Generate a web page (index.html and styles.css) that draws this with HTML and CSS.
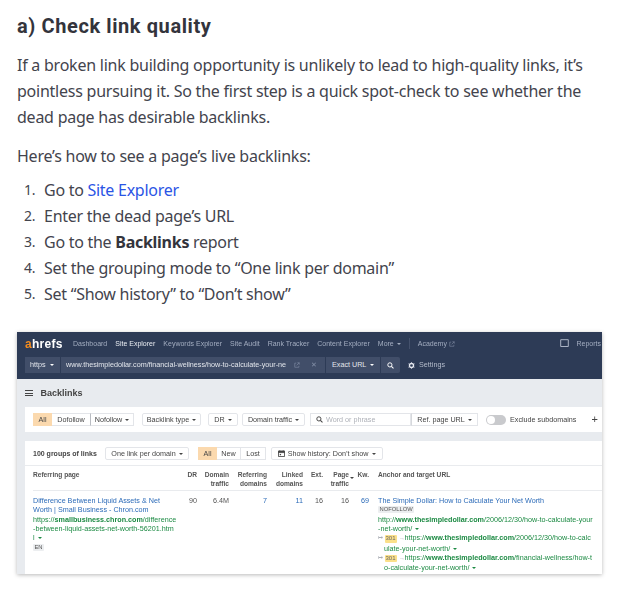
FILE: index.html
```html
<!DOCTYPE html>
<html lang="en">
<head>
<meta charset="utf-8">
<title>Check link quality</title>
<link rel="stylesheet" href="styles.css">
</head>
<body>
<main class="article">
  <h2 class="title">a) Check link quality</h2>
  <p class="para">If a broken link building opportunity is unlikely to lead to high-quality links, it’s pointless pursuing it. So the first step is a quick spot-check to see whether the dead page has desirable backlinks.</p>
  <p class="para intro">Here’s how to see a page’s live backlinks:</p>
  <ol class="steps">
    <li><span>Go to <a class="link" href="#">Site Explorer</a></span></li>
    <li><span>Enter the dead page’s URL</span></li>
    <li><span>Go to the <b>Backlinks</b> report</span></li>
    <li><span>Set the grouping mode to “One link per domain”</span></li>
    <li><span>Set “Show history” to “Don’t show”</span></li>
  </ol>

  <div class="shot">
    <div class="nav">
      <div class="nav-top">
        <span class="logo"><span class="logo-a">a</span>hrefs</span>
        <span class="nav-item">Dashboard</span>
        <span class="nav-item active">Site Explorer</span>
        <span class="nav-item">Keywords Explorer</span>
        <span class="nav-item">Site Audit</span>
        <span class="nav-item">Rank Tracker</span>
        <span class="nav-item">Content Explorer</span>
        <span class="nav-item">More <i class="caret"></i></span>
        <span class="nav-sep"></span>
        <span class="nav-item flush">Academy
          <svg class="ext" viewBox="0 0 8 8"><path d="M3 1.500H1v5.500h5.500V5M4.500 1H7v2.500M7 1 3.500 4.500" fill="none" stroke="#7f8ba3" stroke-width=".8"/></svg>
        </span>
        <span class="reports">
          <svg class="rep-ic" viewBox="0 0 9 9"><path d="M.7.700h7.600v6.800H.7z" fill="none" stroke="#aab3c4" stroke-width="1"/></svg>
          Reports
        </span>
      </div>
      <div class="nav-search">
        <span class="sel proto">https <i class="caret white"></i></span>
        <span class="url"><span class="url-text">www.thesimpledollar.com/financial-wellness/how-to-calculate-your-ne</span>
          <svg class="ext" viewBox="0 0 8 8"><path d="M3 1.500H1v5.500h5.500V5M4.500 1H7v2.500M7 1 3.500 4.500" fill="none" stroke="#8490a8" stroke-width=".8"/></svg>
          <span class="x">✕</span>
        </span>
        <span class="sel mode">Exact URL <i class="caret white"></i></span>
        <span class="sel go">
          <svg class="mag" viewBox="0 0 8 8"><circle cx="3.300" cy="3.300" r="2.400" fill="none" stroke="#fff" stroke-width="1.100"/><path d="M5 5l2.400 2.400" stroke="#fff" stroke-width="1.200"/></svg>
        </span>
        <span class="settings">
          <svg class="gear" viewBox="0 0 10 10"><circle cx="5" cy="5" r="2.900" fill="none" stroke="#e4e7ee" stroke-width="1.900"/><path d="M5 .5v2M5 7.500v2M.8 2.600l1.700 1M7.500 6.400l1.700 1M.8 7.400l1.700-1M7.500 3.600l1.700-1" stroke="#e4e7ee" stroke-width="1.300"/></svg>
          Settings
        </span>
      </div>
    </div>

    <div class="body">
      <div class="page-head">
        <span class="burger"><i></i><i></i><i></i></span>
        <span class="page-title">Backlinks</span>
      </div>

      <div class="filters">
        <span class="seg">
          <span class="btn on f-all">All</span><span class="btn f-do">Dofollow</span><span class="btn f-no">Nofollow <i class="caret"></i></span>
        </span>
        <span class="btn solo f-type">Backlink type <i class="caret"></i></span>
        <span class="btn solo f-dr">DR <i class="caret"></i></span>
        <span class="btn solo f-dt">Domain traffic <i class="caret"></i></span>
        <span class="seg f-search">
          <span class="btn f-word">
            <svg class="mag" viewBox="0 0 8 8"><circle cx="3.300" cy="3.300" r="2.400" fill="none" stroke="#444" stroke-width="1.100"/><path d="M5 5l2.400 2.400" stroke="#444" stroke-width="1.200"/></svg>
            <span class="ph">Word or phrase</span>
          </span><span class="btn f-ref">Ref. page URL <i class="caret"></i></span>
        </span>
        <span class="toggle"><i></i></span>
        <span class="excl">Exclude subdomains</span>
        <span class="plus">+</span>
      </div>

      <div class="panel">
        <div class="toolbar">
          <span class="count">100 groups of links</span>
          <span class="btn solo t-group">One link per domain <i class="caret"></i></span>
          <span class="seg t-seg">
            <span class="btn on t-all">All</span><span class="btn t-new">New</span><span class="btn t-lost">Lost</span>
          </span>
          <span class="btn solo t-hist">
            <svg class="cal" viewBox="0 0 8 8"><path d="M.5 1.500h7v6h-7z" fill="none" stroke="#444" stroke-width="1"/><path d="M.5 1h7v2h-7zM2 0v2M6 0v2" fill="#444" stroke="#444" stroke-width=".6"/><path d="M2 4.500h1.500v1.500H2z" fill="#444"/></svg>
            Show history: Don’t show <i class="caret"></i>
          </span>
        </div>

        <div class="table">
          <div class="th left">Referring page</div>
          <div class="th">DR</div>
          <div class="th">Domain<br>traffic</div>
          <div class="th">Referring<br>domains</div>
          <div class="th">Linked<br>domains</div>
          <div class="th">Ext.</div>
          <div class="th sorted">Page<br>traffic<i class="caret sort"></i></div>
          <div class="th">Kw.</div>
          <div class="th left last">Anchor and target URL</div>

          <div class="td left">
            <a class="anchor" href="#">Difference Between Liquid Assets &amp; Net Worth | Small Business - Chron.com</a>
            <div class="green">https://<b>smallbusiness.chron.com</b>/difference<br>-between-liquid-assets-net-worth-56201.htm<br>l <i class="caret g"></i></div>
            <span class="tag">EN</span>
          </div>
          <div class="td">90</div>
          <div class="td">6.4M</div>
          <div class="td blue">7</div>
          <div class="td blue">11</div>
          <div class="td">16</div>
          <div class="td pt">16</div>
          <div class="td blue">69</div>
          <div class="td left last">
            <a class="anchor" href="#">The Simple Dollar: How to Calculate Your Net Worth</a>
            <div class="tagrow"><span class="tag">NOFOLLOW</span></div>
            <div class="green">http://<b>www.thesimpledollar.com</b>/2006/12/30/how-to-calculate-your<br>-net-worth/ <i class="caret g"></i></div>
            <div class="green redirect"><span class="arr first">↦</span><span class="code">301</span><span class="arr">→</span>https://<b>www.thesimpledollar.com</b>/2006/12/30/how-to-calc<br>ulate-your-net-worth/ <i class="caret g"></i></div>
            <div class="green redirect"><span class="arr first">↦</span><span class="code">301</span><span class="arr">→</span>https://<b>www.thesimpledollar.com</b>/financial-wellness/how-t<br>o-calculate-your-net-worth/ <i class="caret g"></i></div>
          </div>
        </div>
      </div>
    </div>
  </div>
</main>
</body>
</html>
```

FILE: styles.css
```css
*, *::before { box-sizing: border-box; }
html, body { margin: 0; background: #fff; }
body { font-family: "Noto Sans", sans-serif; color: #43444d; width: 621px; height: 589px; overflow: hidden; }
.article { padding: 14px 19px 0 17px; }
.title { margin: 0; font: 700 20px/25px "Roboto", sans-serif; letter-spacing: .6px; color: #33343c; }
.para { margin: 13px 0 0; font-size: 16px; line-height: 26px; letter-spacing: -.24px; }
.intro { margin-top: 13px; }
.steps { margin: 8px 0 0; padding: 0; font-size: 16px; line-height: 26px; letter-spacing: -.27px; list-style: none; counter-reset: step; }
.steps li { counter-increment: step; display: flex; }
.steps li::before { content: counter(step) "."; flex: none; width: 27px; padding-left: 7px; font-size: 14px; }
.steps b { font-weight: 700; color: #33343c; }
.link { color: #2a55e5; text-decoration: none; }

.shot { margin-top: 25px; width: 585px; height: 242px; background: #e8ebef; box-shadow: 0 1px 4px rgba(0,0,0,.28); font-family: "Liberation Sans", sans-serif; font-size: 7.2px; line-height: 9.33px; color: #444; overflow: hidden; filter: blur(.4px); }
.nav { height: 47px; background: #2d3b56; color: #a3adc0; }
.nav-top { height: 25px; display: flex; align-items: center; padding: 0 1px 2px 8px; font-size: 7px; }
.logo { font: 700 12px/1 "Liberation Sans", sans-serif; color: #fff; width: 48px; letter-spacing: .3px; }
.logo-a { color: #f28b1e; }
.nav-item { white-space: nowrap; margin-right: 8px; }
.nav-item.flush { margin-right: 0; }
.active { color: #e8ebf1; }
.nav-sep { width: 1px; height: 11px; background: #44516c; margin-right: 8px; }
.ext { width: 6px; height: 6px; vertical-align: -1px; }
.reports { margin-left: auto; display: flex; align-items: center; gap: 7px; }
.rep-ic { width: 9px; height: 9px; }
.nav-search { height: 16px; display: flex; align-items: stretch; padding-left: 8px; color: #e3e6ec; }
.sel { display: flex; align-items: center; gap: 3px; background: #414e69; }
.proto { width: 35px; padding-left: 5px; margin-right: 1px; }
.url { width: 264px; background: #414e69; display: flex; align-items: center; padding-left: 5px; margin-right: 1px; white-space: nowrap; overflow: hidden; }
.url-text { width: 223px; overflow: hidden; flex: none; }
.url .ext { flex: none; margin-left: 5px; }
.x { margin-left: 11px; color: #8490a8; font-size: 7px; }
.mode { width: 54px; padding-left: 6px; margin-right: 1px; }
.go { width: 19px; justify-content: center; border-radius: 0 2px 2px 0; }
.mag { width: 7px; height: 7px; flex: none; }
.settings { display: flex; align-items: center; gap: 4px; margin-left: 8px; color: #b4bccb; }
.gear { width: 7px; height: 7px; }
.caret { display: inline-block; width: 0; height: 0; border: 2.200px solid transparent; border-top: 2.800px solid #444; border-bottom: 0; vertical-align: 1px; margin-left: 1px; }
.nav .caret { border-top-color: #a3adc0; }
.nav .caret.white { border-top-color: #fff; }
.caret.g { border-top-color: #1c8a43; }

.body { padding-left: 8px; }
.page-head { height: 28px; display: flex; align-items: center; }
.burger { display: flex; flex-direction: column; gap: 1.500px; width: 7.500px; margin-right: 8px; }
.burger i { height: 1px; background: #444; display: block; }
.page-title { font-size: 9px; font-weight: 700; color: #444; padding-top: 1px; }
.filters { height: 25px; background: #fff; display: flex; align-items: center; padding-left: 8px; }
.seg { display: flex; }
.btn { height: 13px; display: flex; align-items: center; justify-content: center; border: 1px solid #e3e5e9; background: #fff; white-space: nowrap; gap: 2px; }
.seg .btn + .btn { border-left: 0; }
.on { background: #fbd9ae; border-color: #fbd9ae; }
.f-all { width: 19px; }
.f-do { width: 39px; border-right: 1px solid #b9bcc2 !important; }
.f-no { width: 43px; }
.solo { border-radius: 2px; }
.f-type { width: 59px; margin-left: 8px; }
.f-dr { width: 30px; margin-left: 7px; }
.f-dt { width: 63px; margin-left: 4px; }
.f-search { margin-left: 5px; }
.f-word { width: 101px; justify-content: flex-start; padding-left: 5px; gap: 3px; }
.ph { color: #aeb1b8; }
.f-ref { width: 67px; border-left: 1px solid #d6d8dc !important; }
.toggle { width: 20px; height: 10px; border-radius: 5px; background: #c9cacd; margin-left: 8px; display: flex; align-items: center; padding-left: 1px; }
.toggle i { width: 8px; height: 8px; border-radius: 50%; background: #fff; display: block; }
.excl { margin-left: 4px; white-space: nowrap; }
.plus { margin-left: auto; margin-right: 4px; font-size: 11px; line-height: 1; color: #444; }
.panel { margin-top: 9px; background: #fff; height: 133px; }
.toolbar { height: 25px; display: flex; align-items: flex-start; padding: 6px 0 0 8px; border-bottom: 1px solid #e9ebee; }
.count { width: 72px; font-size: 7px; font-weight: 700; line-height: 13px; white-space: nowrap; }
.t-group { width: 84px; }
.t-seg { margin-left: 9px; }
.t-all { width: 19px; }
.t-new { width: 24px; }
.t-lost { width: 25px; }
.t-hist { width: 112px; margin-left: 5px; gap: 3px; }
.cal { width: 7px; height: 7px; }
.table { display: grid; grid-template-columns: 144px 20px 32px 38px 36px 20px 32px 14px 1fr; padding-left: 8px; }
.th { height: 25px; padding-top: 4px; text-align: right; font-size: 6.600px; font-weight: 700; color: #555; border-bottom: 1px solid #e9ebee; white-space: nowrap; }
.th.left { text-align: left; }
.sorted { position: relative; padding-right: 6px; }
.sort { position: absolute; right: 1px; top: 11px; }
.td { padding-top: 5px; text-align: right; color: #555; min-height: 82px; }
.td.left { text-align: left; }
.last { padding-left: 9px; }
.td.pt { padding-right: 6px; }
.blue, .anchor { color: #2c6bb8; text-decoration: none; }
.anchor { display: block; }
.green { color: #1c8a43; white-space: nowrap; }
.redirect { padding-left: 6px; }
.arr { display: inline-block; width: 5.500px; color: #a9adb4; font-size: 6px; }
.arr.first { margin-left: -6px; width: 6.500px; }
.code { display: inline-block; width: 12px; margin-right: 2.500px; text-align: center; background: #fbe08a; color: #666; border-radius: 1px; font-size: 6px; line-height: 7.500px; }
.tagrow { height: 9.330px; }
.tag { display: inline-block; background: #eceef0; color: #555; font-size: 5.800px; line-height: 7px; padding: 0 1.500px; border-radius: 1px; margin-top: 1px; vertical-align: top; }
```
